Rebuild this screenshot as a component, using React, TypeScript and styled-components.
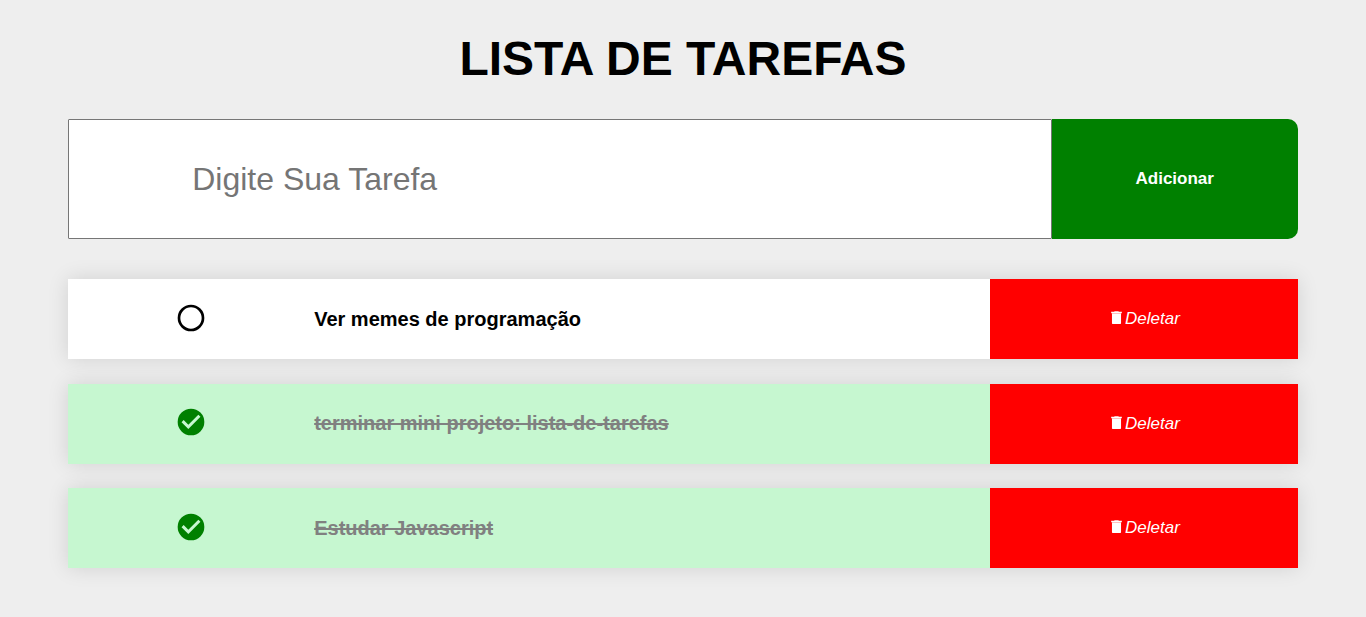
import React, { FormEvent, useState } from "react";
import styled, { createGlobalStyle } from "styled-components";

const GlobalStyle = createGlobalStyle`
  *, *::before, *::after { box-sizing: border-box; }
  body {
    margin: 0;
    background: #eee;
    font-family: "Liberation Sans", Arial, sans-serif;
  }
`;

const Page = styled.main`
  width: 90%;
  margin: 0 auto;
  padding: 31px 0 48px;
`;

const Title = styled.h1`
  margin: 0 0 32px;
  font-size: 48px;
  line-height: 56px;
  text-align: center;
`;

const TaskForm = styled.form`
  display: flex;
  height: 120px;
  margin-bottom: 40px;
`;

const TaskInput = styled.input`
  width: 80%;
  padding: 0 0 0 10%;
  border: 1px solid #767676;
  border-radius: 1px;
  background: #fff;
  font: 32px "Liberation Sans", Arial, sans-serif;
  &::placeholder { color: #757575; opacity: 1; }
`;

const AddButton = styled.button`
  width: 20%;
  padding: 0;
  border: 0;
  border-radius: 0 10px 10px 0;
  background: #008000;
  color: #fff;
  font: bold 17px "Liberation Sans", Arial, sans-serif;
  cursor: pointer;
`;

const TaskList = styled.ul`
  margin: 0;
  padding: 0;
  list-style: none;
`;

const TaskRow = styled.li<{ $done: boolean }>`
  display: flex;
  height: 80px;
  background: ${(p) => (p.$done ? "#c6f7d0" : "#fff")};
  box-shadow: 0 0 20px rgba(0, 0, 0, 0.12);
  & + & { margin-top: 2%; }
`;

const TaskLabel = styled.label<{ $done: boolean }>`
  display: flex;
  align-items: center;
  width: 75%;
  color: ${(p) => (p.$done ? "#808080" : "#000")};
  font-size: 20px;
  font-weight: bold;
  text-decoration: ${(p) => (p.$done ? "line-through" : "none")};
  cursor: pointer;
`;

const CheckCell = styled.span<{ $done: boolean }>`
  display: grid;
  place-items: center;
  flex: 0 0 26.6667%;
  padding-bottom: 3px;
  color: ${(p) => (p.$done ? "#008000" : "#000")};
  & > * { grid-area: 1 / 1; }
`;

const Checkbox = styled.input`
  width: 32px;
  height: 32px;
  margin: 0;
  opacity: 0;
  cursor: pointer;
`;

const Icon = styled.svg<{ $size: number }>`
  width: ${(p) => p.$size}px;
  height: ${(p) => p.$size}px;
  fill: currentColor;
`;

const DeleteButton = styled.button`
  display: flex;
  align-items: center;
  justify-content: center;
  width: 25%;
  padding: 0;
  border: 0;
  background: #f00;
  color: #fff;
  font: italic 17px "Liberation Sans", Arial, sans-serif;
  cursor: pointer;
  & > svg { margin-bottom: 3px; }
`;

const CIRCLE =
  "M12 20a8 8 0 1 1 0-16 8 8 0 0 1 0 16m0-18a10 10 0 1 0 0 20 10 10 0 0 0 0-20z";
const CHECK_CIRCLE =
  "M12 2a10 10 0 1 0 0 20 10 10 0 0 0 0-20M10 17.2l-5.1-5.1 1.6-1.6L10 14l7.5-7.5 1.6 1.6z";
const TRASH =
  "M19.5 4h-4l-1-1h-5l-1 1h-4v2h15zM5.6 20.2a1 1 0 0 0 1 1h10.8a1 1 0 0 0 1-1V6.5H5.6z";

interface Task {
  id: number;
  text: string;
  done: boolean;
}

const initialTasks: Task[] = [
  { id: 3, text: "Ver memes de programação", done: false },
  { id: 2, text: "terminar mini projeto: lista-de-tarefas", done: true },
  { id: 1, text: "Estudar Javascript", done: true },
];

export default function App() {
  const [tasks, setTasks] = useState(initialTasks);
  const [text, setText] = useState("");

  const addTask = (event: FormEvent) => {
    event.preventDefault();
    if (!text.trim()) return;
    setTasks([{ id: Date.now(), text, done: false }, ...tasks]);
    setText("");
  };

  const toggleTask = (id: number) =>
    setTasks(tasks.map((t) => (t.id === id ? { ...t, done: !t.done } : t)));

  return (
    <>
      <GlobalStyle />
      <Page>
        <Title>LISTA DE TAREFAS</Title>
        <TaskForm onSubmit={addTask}>
          <TaskInput
            type="text"
            aria-label="Digite Sua Tarefa"
            placeholder="Digite Sua Tarefa"
            value={text}
            onChange={(e) => setText(e.target.value)}
          />
          <AddButton type="submit">Adicionar</AddButton>
        </TaskForm>
        <TaskList>
          {tasks.map((task) => (
            <TaskRow key={task.id} $done={task.done}>
              <TaskLabel $done={task.done}>
                <CheckCell $done={task.done}>
                  <Icon $size={32} viewBox="0 0 24 24" aria-hidden="true">
                    <path fillRule="evenodd" d={task.done ? CHECK_CIRCLE : CIRCLE} />
                  </Icon>
                  <Checkbox
                    type="checkbox"
                    checked={task.done}
                    onChange={() => toggleTask(task.id)}
                  />
                </CheckCell>
                {task.text}
              </TaskLabel>
              <DeleteButton
                type="button"
                onClick={() => setTasks(tasks.filter((t) => t.id !== task.id))}
              >
                <Icon $size={17} viewBox="0 0 24 24" aria-hidden="true">
                  <path d={TRASH} />
                </Icon>
                Deletar
              </DeleteButton>
            </TaskRow>
          ))}
        </TaskList>
      </Page>
    </>
  );
}
